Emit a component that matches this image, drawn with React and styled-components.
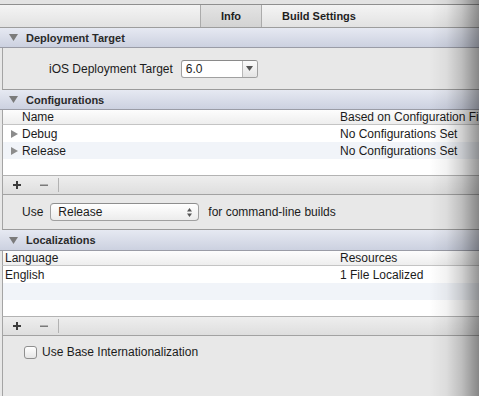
import React from 'react';
import styled, { createGlobalStyle, css } from 'styled-components';

const GlobalStyle = createGlobalStyle`
  html, body {
    margin: 0;
    padding: 0;
    background: #e8e8e8;
    overflow: hidden;
  }
  body {
    font-family: "Liberation Sans", Arial, sans-serif;
    font-size: 12px;
    color: #1b1b1b;
  }
`;

const Page = styled.div`
  position: relative;
  width: 479px;
  height: 396px;
  overflow: hidden;
  background: #e8e8e8;
  white-space: nowrap;
`;

const TopStrip = styled.div`
  height: 4px;
  background: #e3e3e3;
  border-bottom: 1px solid #8f8f8f;
`;

const TabBar = styled.div`
  display: flex;
  height: 22px;
  padding-left: 200px;
  background: linear-gradient(#f4f4f4, #e2e2e2);
  border-bottom: 1px solid #9d9d9d;
`;

const Tab = styled.div`
  box-sizing: border-box;
  display: flex;
  align-items: center;
  justify-content: center;
  width: ${p => p.$w}px;
  font-weight: bold;
  font-size: 11px;
  color: #1e1e1e;
  ${p => p.$active && css`
    background: linear-gradient(#e4e4e4, #d3d3d3);
    border-left: 1px solid #ababab;
    border-right: 1px solid #ababab;
  `}
`;

const SectionHeader = styled.div`
  display: flex;
  align-items: center;
  gap: 8px;
  height: ${p => p.$h || 19}px;
  padding-left: 9px;
  background: linear-gradient(#e6e9f2, #ccd1e0);
  border-bottom: 1px solid #9a9ca6;
  font-weight: bold;
  font-size: 11px;
  color: #2a2a2a;
`;

const Pane = styled.div`
  margin-left: 2px;
  border-left: 1px solid #a4a4a4;
`;

const DeployBody = styled(Pane)`
  display: flex;
  align-items: center;
  height: 41px;
  padding-left: 46px;
  border-bottom: 1px solid #9b9b9b;
`;

const ValuePopup = styled.div`
  box-sizing: border-box;
  display: flex;
  margin-left: 8px;
  width: 77px;
  height: 18px;
  border: 1px solid #a0a0a0;
  border-top-color: #8a8a8a;
  border-radius: 3px;
  background: #fff;
  overflow: hidden;
`;

const PopupValue = styled.div`
  flex: 1;
  display: flex;
  align-items: center;
  padding-left: 4px;
`;

const PopupArrow = styled.div`
  display: flex;
  align-items: center;
  justify-content: center;
  width: 14px;
  border-left: 1px solid #b8b8b8;
  background: linear-gradient(#fbfbfb, #e4e4e4);
`;

const TableHead = styled(Pane)`
  display: grid;
  grid-template-columns: 337px 1fr;
  align-items: center;
  height: 14px;
  background: linear-gradient(#fdfdfd, #eeeeee);
  border-bottom: 1px solid #c4c4c4;
`;

const Row = styled(Pane)`
  display: grid;
  grid-template-columns: 337px 1fr;
  align-items: center;
  height: ${p => p.$h || 17}px;
  background: ${p => (p.$alt ? '#f1f4f9' : '#ffffff')};
  ${p => p.$last && css`border-bottom: 1px solid #b3b3b3;`}
`;

const Cell = styled.div`
  display: flex;
  align-items: center;
  gap: 4px;
  padding-left: ${p => p.$pad || 0}px;
  overflow: hidden;
`;

const ButtonBar = styled(Pane)`
  display: flex;
  align-items: center;
  height: 18px;
  background: linear-gradient(#eeeeee, #dedede);
  border-bottom: 1px solid #a2a2a2;
`;

const BarButton = styled.div`
  display: flex;
  align-items: center;
  justify-content: center;
  width: ${p => p.$w}px;
  height: 100%;
`;

const BarDivider = styled.div`
  width: 1px;
  height: 14px;
  background: #b2b2b2;
`;

const UseRow = styled(Pane)`
  display: flex;
  align-items: center;
  height: 34px;
  padding-left: 19px;
  border-bottom: 1px solid #9b9b9b;
`;

const SelectPopup = styled.div`
  box-sizing: border-box;
  display: flex;
  align-items: center;
  justify-content: space-between;
  margin: 0 9px 0 7px;
  width: 149px;
  height: 18px;
  padding: 0 6px 0 7px;
  border: 1px solid #a0a0a0;
  border-top-color: #8e8e8e;
  border-radius: 4px;
  background: linear-gradient(#ffffff, #ececec);
`;

const BottomPane = styled(Pane)`
  display: flex;
  align-items: flex-start;
  height: 80px;
  padding: 9px 0 0 21px;
`;

const CheckRow = styled.label`
  display: flex;
  align-items: center;
  gap: 5px;
`;

const CheckBox = styled.span`
  box-sizing: border-box;
  width: 13px;
  height: 13px;
  border: 1px solid #8f8f8f;
  border-radius: 3px;
  background: linear-gradient(#ffffff, #e6e6e6);
`;

const Shade = styled.div`
  position: absolute;
  top: 0;
  right: 0;
  width: 50px;
  height: 100%;
  pointer-events: none;
  background: linear-gradient(
    to right,
    rgba(0, 0, 0, 0) 0%,
    rgba(0, 0, 0, 0.05) 35%,
    rgba(0, 0, 0, 0.18) 65%,
    rgba(0, 0, 0, 0.42) 100%
  );
`;

const DownTriangle = ({ w = 9, h = 7, color = '#7b7b7b' }) => (
  <svg width={w} height={h} viewBox={`0 0 ${w} ${h}`}>
    <polygon points={`0,0 ${w},0 ${w / 2},${h}`} fill={color} />
  </svg>
);

const RightTriangle = () => (
  <svg width="7" height="8" viewBox="0 0 7 8">
    <polygon points="0,0 7,4 0,8" fill="#8c8c8c" />
  </svg>
);

const UpDown = () => (
  <svg width="5" height="9" viewBox="0 0 5 9">
    <polygon points="0,3.5 5,3.5 2.5,0" fill="#555" />
    <polygon points="0,5.5 5,5.5 2.5,9" fill="#555" />
  </svg>
);

const Plus = () => (
  <svg width="8" height="8" viewBox="0 0 8 8">
    <rect x="3" y="0" width="2" height="8" fill="#3c3c3c" />
    <rect x="0" y="3" width="8" height="2" fill="#3c3c3c" />
  </svg>
);

const Minus = () => (
  <svg width="8" height="8" viewBox="0 0 8 8">
    <rect x="0" y="3.5" width="8" height="1.5" fill="#7a7a7a" />
  </svg>
);

const Bar = () => (
  <ButtonBar>
    <BarButton $w={27}><Plus /></BarButton>
    <BarButton $w={28}><Minus /></BarButton>
    <BarDivider />
  </ButtonBar>
);

const configurations = ['Debug', 'Release'];

const App = () => {
  return (
    <Page>
      <GlobalStyle />
      <TopStrip />
      <TabBar>
        <Tab $w={62} $active>Info</Tab>
        <Tab $w={114}>Build Settings</Tab>
      </TabBar>

      <SectionHeader>
        <DownTriangle />
        Deployment Target
      </SectionHeader>
      <DeployBody>
        iOS Deployment Target
        <ValuePopup>
          <PopupValue>6.0</PopupValue>
          <PopupArrow><DownTriangle w={7} h={5} color="#555" /></PopupArrow>
        </ValuePopup>
      </DeployBody>

      <SectionHeader>
        <DownTriangle />
        Configurations
      </SectionHeader>
      <TableHead>
        <Cell $pad={19}>Name</Cell>
        <Cell>Based on Configuration File</Cell>
      </TableHead>
      {configurations.map((name, i) => (
        <Row key={name} $alt={i % 2 === 1}>
          <Cell $pad={8}><RightTriangle />{name}</Cell>
          <Cell>No Configurations Set</Cell>
        </Row>
      ))}
      <Row $h={16} $last />
      <Bar />
      <UseRow>
        Use
        <SelectPopup>
          Release
          <UpDown />
        </SelectPopup>
        for command-line builds
      </UseRow>

      <SectionHeader $h={20}>
        <DownTriangle />
        Localizations
      </SectionHeader>
      <TableHead>
        <Cell $pad={2}>Language</Cell>
        <Cell>Resources</Cell>
      </TableHead>
      <Row>
        <Cell $pad={2}>English</Cell>
        <Cell>1 File Localized</Cell>
      </Row>
      <Row $alt />
      <Row $h={16} $last />
      <Bar />
      <BottomPane>
        <CheckRow>
          <CheckBox />
          Use Base Internationalization
        </CheckRow>
      </BottomPane>

      <Shade />
    </Page>
  );
};

export default App;
